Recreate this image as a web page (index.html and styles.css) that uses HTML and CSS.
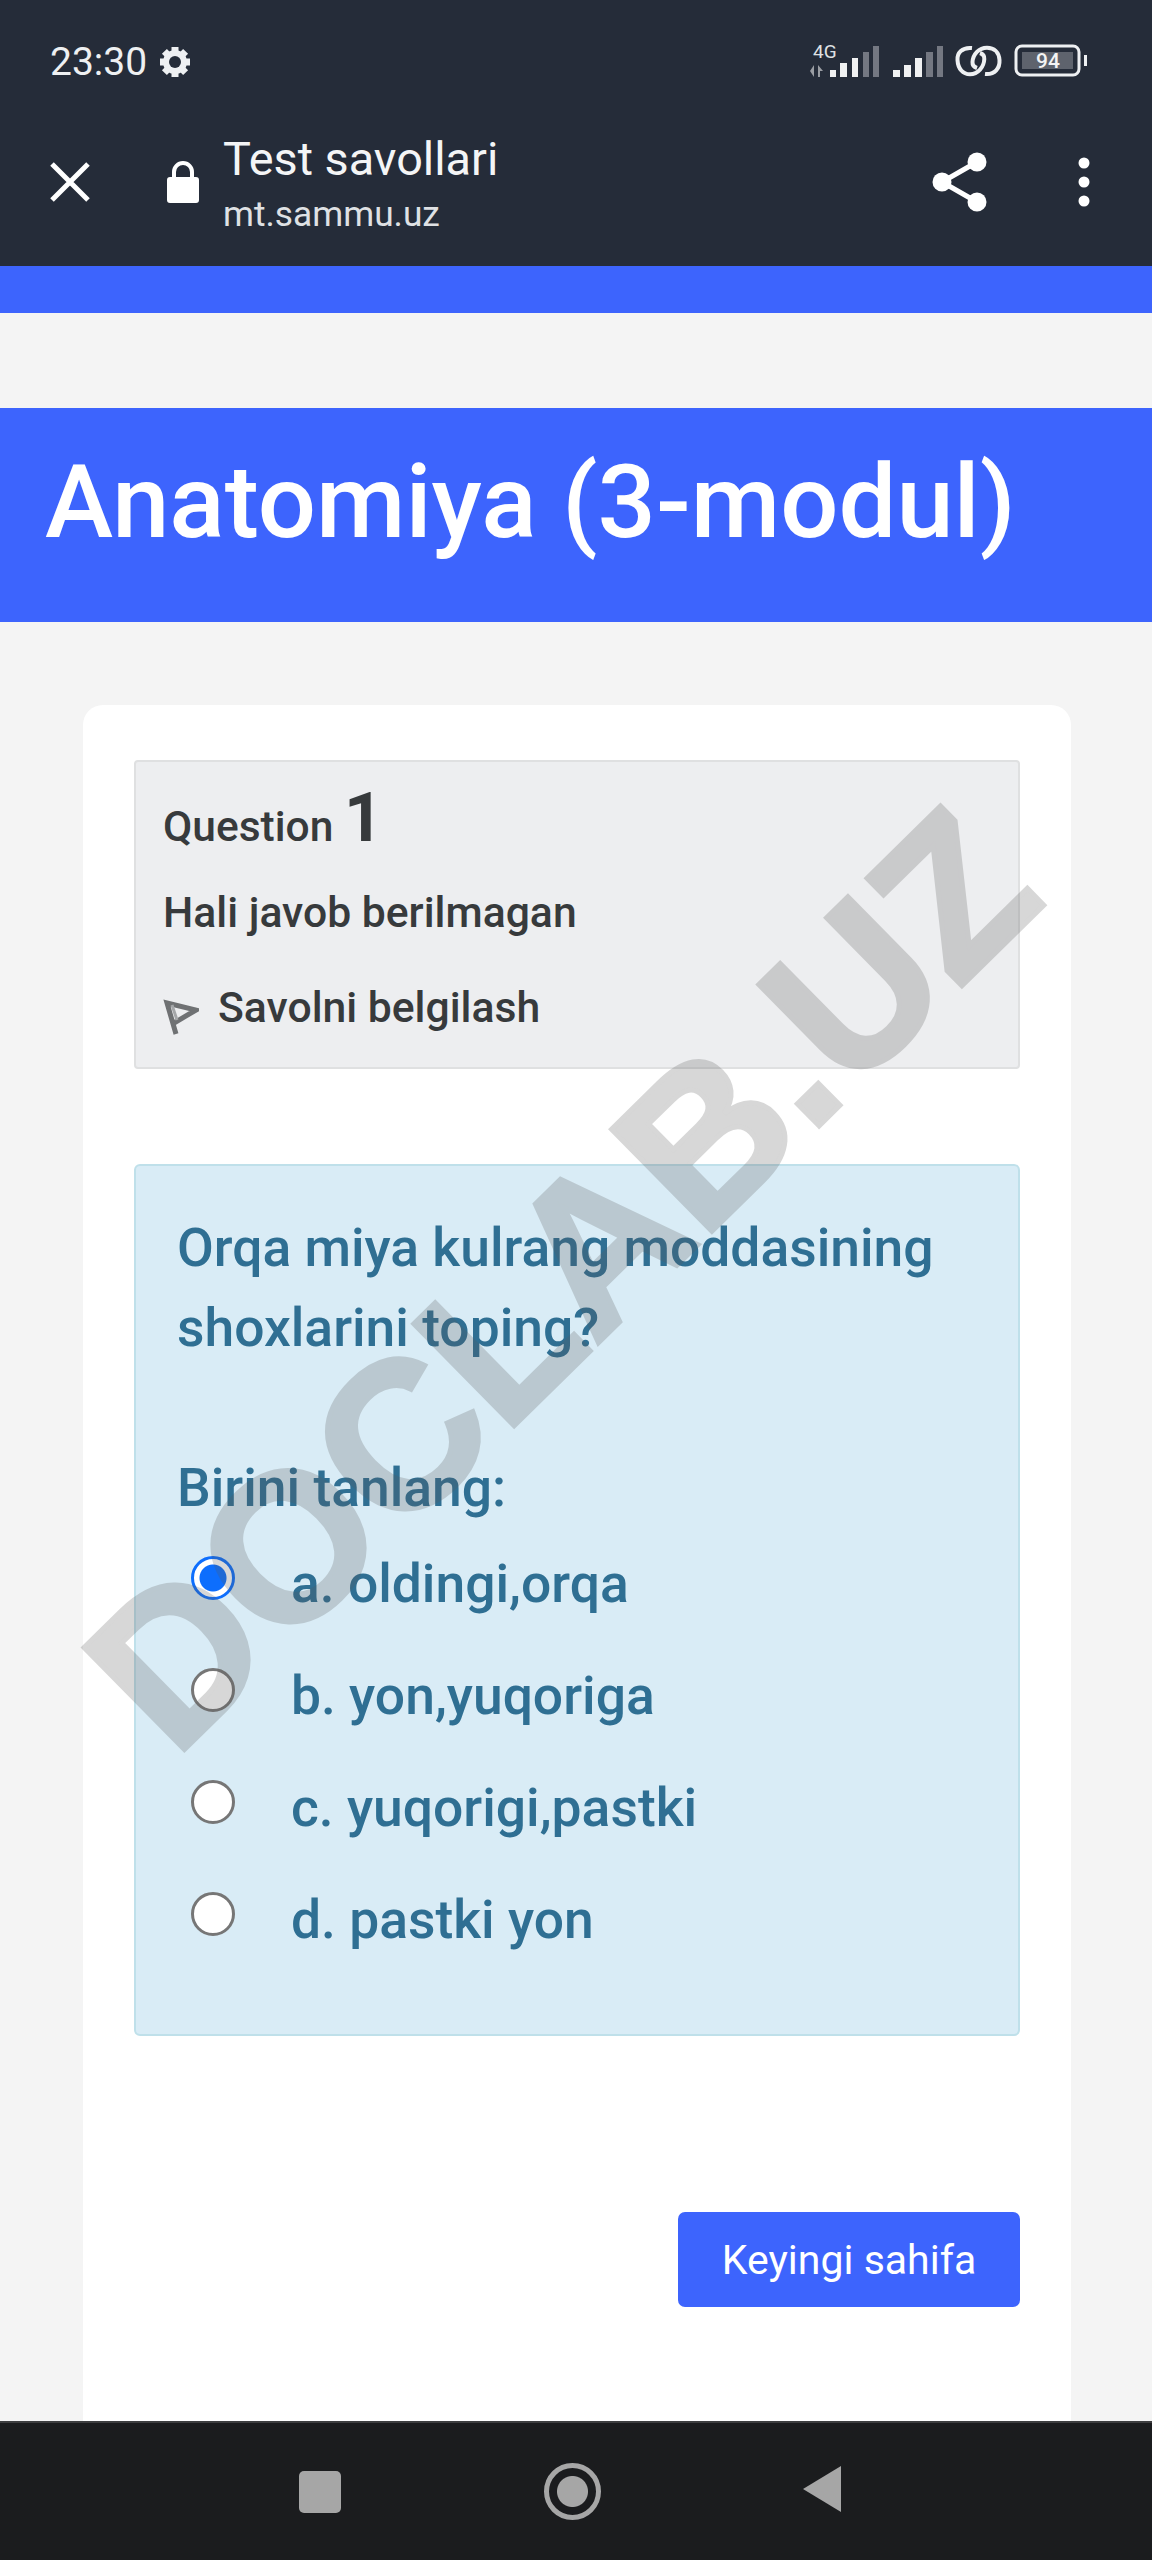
FILE: index.html
```html
<!DOCTYPE html>
<html lang="en">
<head>
    <meta charset="UTF-8">
    <meta name="viewport" content="width=device-width, initial-scale=1.0">
    <title>Test savollari</title>
    <link rel="stylesheet" href="styles.css">
</head>
<body>
    <div class="phone-top">
        <div class="status-bar">
            <div class="status-left">
                <span class="clock">23:30</span>
                <svg class="gear" viewBox="0 0 32 32"><path d="M16 1v30M1 16h30M5.400 5.400l21.200 21.200M26.600 5.400L5.400 26.600" stroke="#eef0f2" stroke-width="7"/><circle cx="16" cy="16" r="12" fill="#eef0f2"/><circle cx="16" cy="16" r="6" fill="#252c39"/></svg>
            </div>
            <svg class="status-icons" viewBox="0 -6 280 48">
                <text x="3" y="14" class="net-label">4G</text>
                <path d="M4 21v12l-4-6zM8 21l5 6h-3v6H8z" fill="#9a9da3"/>
                <rect x="20" y="26" width="6" height="7" fill="#f0f1f2"/>
                <rect x="30" y="19" width="7" height="14" fill="#f0f1f2"/>
                <rect x="42" y="14" width="6" height="19" fill="#f0f1f2"/>
                <rect x="53" y="8" width="6" height="25" fill="#747882"/>
                <rect x="63" y="2" width="6" height="31" fill="#747882"/>
                <rect x="83" y="26" width="7" height="7" fill="#f0f1f2"/>
                <rect x="94" y="21" width="7" height="12" fill="#f0f1f2"/>
                <rect x="105" y="14" width="7" height="19" fill="#f0f1f2"/>
                <rect x="116" y="8" width="7" height="25" fill="#747882"/>
                <rect x="127" y="2" width="6" height="31" fill="#747882"/>
                <g fill="none" stroke="#eef0f2" stroke-width="4">
                    <path d="M162 4C152 3 147 9 147.500 16C148 25 153 30.300 160 30.300C168 30.300 174 23 174.300 15C174.500 12 173 10 170 9"/>
                    <path d="M175 30C185 31 190 24 189.500 16C189 8 184 3.700 177 3.700C169 3.700 163 10 162.500 18C162.300 21 164 23 167 24"/>
                </g>
                <rect x="206" y="2" width="63" height="29" rx="6" fill="none" stroke="#eef0f2" stroke-width="3"/>
                <rect x="212" y="8" width="51" height="17" fill="#5e636d"/>
                <text x="238" y="24" class="battery-label">94</text>
                <rect x="274" y="11" width="3" height="11" fill="#eef0f2"/>
            </svg>
        </div>
        <div class="title-bar">
            <svg class="close-icon" viewBox="0 0 44 44"><path d="M4 4l36 36M40 4L4 40" stroke="#fff" stroke-width="5"/></svg>
            <svg class="lock-icon" viewBox="0 0 32 42"><path fill="#fff" d="M3 16h2v-5a11 11 0 0 1 22 0v5h2a3 3 0 0 1 3 3v20a3 3 0 0 1-3 3H3a3 3 0 0 1-3-3V19a3 3 0 0 1 3-3zm6 0h14v-5a7 7 0 0 0-14 0z"/></svg>
            <div class="page-name">
                <div class="page-title">Test savollari</div>
                <div class="page-url">mt.sammu.uz</div>
            </div>
            <svg class="share-icon" viewBox="0 0 56 60"><circle cx="45" cy="10" r="9.500" fill="#fff"/><circle cx="45" cy="50" r="9.500" fill="#fff"/><circle cx="10" cy="30" r="9.500" fill="#fff"/><path d="M45 10L10 30l35 20" fill="none" stroke="#fff" stroke-width="5"/></svg>
            <svg class="more-icon" viewBox="0 0 12 50"><circle cx="6" cy="6" r="5.500" fill="#fff"/><circle cx="6" cy="25" r="5.500" fill="#fff"/><circle cx="6" cy="44" r="5.500" fill="#fff"/></svg>
        </div>
    </div>
    <div class="top-strip"></div>

    <div class="page-header">
        <h1>Anatomiya (3-modul)</h1>
    </div>

    <div class="card">
        <div class="info-box">
            <div class="question-no">Question <span>1</span></div>
            <div class="state">Hali javob berilmagan</div>
            <div class="flag-row">
                <svg class="flag-icon" viewBox="0 0 36 40"><path d="M13 37L4 6l29 7-22 13" fill="none" stroke="#6f7173" stroke-width="5"/><path d="M9 8l5 15" stroke="#a5a7a9" stroke-width="3"/></svg>
                <span>Savolni belgilash</span>
            </div>
        </div>

        <div class="question-box">
            <p class="question-text">Orqa miya kulrang moddasining shoxlarini toping?</p>
            <p class="prompt">Birini tanlang:</p>
            <div class="answers">
                <div class="answer"><span class="radio checked"></span>a. oldingi,orqa</div>
                <div class="answer"><span class="radio"></span>b. yon,yuqoriga</div>
                <div class="answer"><span class="radio"></span>c. yuqorigi,pastki</div>
                <div class="answer"><span class="radio"></span>d. pastki yon</div>
            </div>
        </div>

        <div class="form-actions">
            <button>Keyingi sahifa</button>
        </div>
    </div>

    <div class="watermark">DOCLAB.UZ</div>

    <div class="nav-bar">
        <span class="nav-square"></span>
        <span class="nav-circle"></span>
        <svg class="nav-back" viewBox="0 0 40 48"><path d="M40 1v46L2 24z" fill="#a6a6a6"/></svg>
    </div>
</body>
</html>
```

FILE: styles.css
```css
html, body {
    margin: 0;
    padding: 0;
}
body {
    width: 1152px;
    height: 2560px;
    position: relative;
    overflow: hidden;
    background-color: #f4f4f4;
    font-family: Roboto, sans-serif;
    color: #373a3c;
}
.phone-top {
    height: 266px;
    background-color: #252c39;
    color: #eef0f2;
}
.status-bar {
    height: 124px;
    padding: 0 62px 0 50px;
    display: flex;
    justify-content: space-between;
    align-items: center;
}
.status-left {
    display: flex;
    align-items: center;
    gap: 12px;
}
.clock {
    font-size: 39px;
}
.gear {
    width: 32px;
    height: 32px;
}
.status-icons {
    width: 280px;
    height: 48px;
}
.net-label {
    font-size: 19px;
    fill: #dfe1e4;
}
.battery-label {
    font-size: 21px;
    font-weight: 500;
    fill: #f4f4f4;
    text-anchor: middle;
}
.title-bar {
    display: flex;
    align-items: center;
    height: 116px;
    padding-left: 48px;
}
.close-icon {
    width: 44px;
    height: 44px;
}
.lock-icon {
    width: 32px;
    height: 42px;
    margin-left: 75px;
}
.page-name {
    margin: 6px 0 0 24px;
    flex: 1;
}
.page-title {
    font-size: 46.800px;
    line-height: 56px;
    color: #f4f5f6;
}
.page-url {
    margin-top: 2px;
    font-size: 35.300px;
    line-height: 50px;
    color: #dfe1e4;
}
.share-icon {
    width: 56px;
    height: 60px;
    margin-right: 90px;
}
.more-icon {
    width: 12px;
    height: 50px;
    margin-right: 62px;
}
.top-strip {
    height: 47px;
    background-color: #3d64fd;
}
.page-header {
    margin-top: 95px;
    height: 214px;
    box-sizing: border-box;
    padding: 0 0 26px 45px;
    background-color: #3d64fd;
    display: flex;
    align-items: center;
}
.page-header h1 {
    margin: 0;
    color: #fff;
    font-size: 102.700px;
    font-weight: 500;
    white-space: nowrap;
}
.card {
    margin: 83px 81px 0 83px;
    height: 1800px;
    padding: 55px 51px 0;
    background: #fff;
    border-radius: 20px;
}
.info-box {
    height: 309px;
    box-sizing: border-box;
    padding: 16px 27px 0;
    background-color: #edeef0;
    border: 2px solid #dfe0e1;
    border-radius: 4px;
}
.question-no {
    font-size: 42.500px;
    font-weight: 500;
    line-height: 80px;
}
.question-no span {
    font-size: 68px;
    font-weight: 700;
}
.state {
    font-size: 42.700px;
    font-weight: 500;
    line-height: 60px;
    margin-top: 15px;
}
.flag-row {
    display: flex;
    align-items: center;
    gap: 19px;
    margin-top: 35px;
    font-size: 42.700px;
    font-weight: 500;
    line-height: 56px;
}
.flag-icon {
    width: 36px;
    height: 40px;
    margin-top: 20px;
}
.question-box {
    margin-top: 95px;
    height: 872px;
    box-sizing: border-box;
    padding: 42px 41px 0;
    background-color: #d9ecf6;
    border: 2px solid #bfe0ea;
    border-radius: 6px;
    color: #2f6f93;
    font-size: 53.400px;
    font-weight: 500;
}
.question-text {
    margin: 0;
    line-height: 80px;
}
.prompt {
    margin: 80px 0 0;
    line-height: 80px;
}
.answers {
    margin-top: -1px;
}
.answer {
    display: flex;
    align-items: center;
    height: 112px;
}
.radio {
    width: 44px;
    height: 44px;
    box-sizing: border-box;
    margin: -10px 56px 0 14px;
    background: #fff;
    border: 3px solid #767676;
    border-radius: 50%;
}
.radio.checked {
    border-color: #0d6efd;
    background: radial-gradient(circle, #0d6efd 0 13px, #fff 14px);
}
.form-actions {
    margin-top: 176px;
    display: flex;
    justify-content: flex-end;
}
.form-actions button {
    width: 342px;
    height: 95px;
    background-color: #3d64fd;
    color: #fff;
    border: none;
    border-radius: 7px;
    font-family: Roboto, sans-serif;
    font-size: 41px;
}
.watermark {
    position: absolute;
    left: -38px;
    top: 1192px;
    width: 1130px;
    text-align: center;
    font-family: "Liberation Sans", sans-serif;
    font-size: 208px;
    font-weight: 700;
    line-height: 240px;
    white-space: nowrap;
    color: #5a5a5a;
    -webkit-text-stroke: 5px #5a5a5a;
    opacity: 0.24;
    transform: rotate(-44.500deg);
}
.nav-bar {
    position: absolute;
    left: 0;
    right: 0;
    bottom: 0;
    height: 139px;
    background-color: #1b1c1e;
    border-top: 2px solid #3d3e40;
    box-sizing: border-box;
    display: flex;
    align-items: center;
}
.nav-square {
    width: 42px;
    height: 42px;
    margin-left: 299px;
    background: #a6a6a6;
    border-radius: 5px;
}
.nav-circle {
    width: 57px;
    height: 57px;
    box-sizing: border-box;
    margin-left: 203px;
    border: 5px solid #a6a6a6;
    border-radius: 50%;
    background: radial-gradient(circle, #a6a6a6 0 15px, transparent 16px);
}
.nav-back {
    width: 40px;
    height: 48px;
    margin: -6px 0 0 200px;
}
```
